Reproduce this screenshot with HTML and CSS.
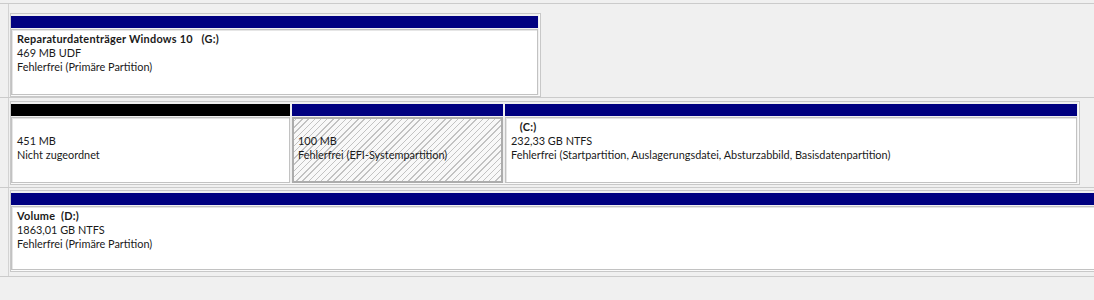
FILE: index.html
```html
<!DOCTYPE html>
<html lang="de">

<head>
    <meta charset="UTF-8">
    <meta name="viewport" content="width=device-width, initial-scale=1.0">
    <title>Datenträgerverwaltung</title>
    <link rel="stylesheet" href="styles.css">
</head>

<body>
    <div class="console">
        <div class="disk disk-g">
            <div class="gutter"></div>
            <div class="track">
                <div class="frame frame-g">
                    <div class="part part-g">
                        <div class="bar"></div>
                        <div class="box">
                            <div class="name">Reparaturdatenträger Windows 10   (G:)</div>
                            <div>469 MB UDF</div>
                            <div>Fehlerfrei (Primäre Partition)</div>
                        </div>
                    </div>
                </div>
            </div>
        </div>

        <div class="disk disk-0">
            <div class="gutter"></div>
            <div class="track">
                <div class="frame frame-0">
                    <div class="part part-free">
                        <div class="bar bar-free"></div>
                        <div class="box">
                            <div class="name"></div>
                            <div>451 MB</div>
                            <div>Nicht zugeordnet</div>
                        </div>
                    </div>
                    <div class="part part-efi">
                        <div class="bar"></div>
                        <div class="box box-selected">
                            <div class="name"></div>
                            <div>100 MB</div>
                            <div>Fehlerfrei (EFI-Systempartition)</div>
                        </div>
                    </div>
                    <div class="part part-c">
                        <div class="bar"></div>
                        <div class="box">
                            <div class="name">   (C:)</div>
                            <div>232,33 GB NTFS</div>
                            <div>Fehlerfrei (Startpartition, Auslagerungsdatei, Absturzabbild, Basisdatenpartition)</div>
                        </div>
                    </div>
                </div>
            </div>
        </div>

        <div class="disk disk-1">
            <div class="gutter"></div>
            <div class="track">
                <div class="frame frame-1">
                    <div class="part part-d">
                        <div class="bar"></div>
                        <div class="box">
                            <div class="name">Volume  (D:)</div>
                            <div>1863,01 GB NTFS</div>
                            <div>Fehlerfrei (Primäre Partition)</div>
                        </div>
                    </div>
                </div>
            </div>
        </div>
    </div>
</body>

</html>
```

FILE: styles.css
```css
body {
    margin: 0;
    background-color: #f0f0f0;
    font-family: Lato, "Liberation Sans", sans-serif;
    font-size: 10.9px;
    color: #1a1a1a;
    overflow: hidden;
}

.console {
    margin-top: 3px;
    border-top: 1px solid #cbcbcb;
}

.disk {
    display: flex;
    border-bottom: 1px solid #cbcbcb;
}

.gutter {
    width: 8px;
    flex-shrink: 0;
    border-right: 1px solid #d3d3d3;
}

.track {
    flex: 1;
    padding-left: 1px;
}

.disk-g .track {
    padding-top: 9px;
}

.disk-0 .track {
    padding-top: 3px;
    padding-bottom: 2px;
}

.disk-1 .track {
    padding-top: 2px;
    padding-bottom: 4px;
}

.frame {
    display: flex;
    gap: 2px;
    padding: 2px 2px 1px 0;
    border: 1px solid #c8c8c8;
    box-shadow: inset -1px -1px 0 #fafafa;
    box-sizing: border-box;
}

.frame-g {
    width: 531px;
}

.frame-0 {
    width: 1070px;
}

.frame-1 {
    width: 1110px;
}

.part {
    display: flex;
    flex-direction: column;
}

.part-g {
    width: 527px;
}

.part-free {
    width: 279px;
}

.part-efi {
    width: 211px;
}

.part-c {
    width: 572px;
}

.part-d {
    flex: 1;
}

.bar {
    height: 12px;
    background-color: #000080;
}

.bar-free {
    background-color: #000;
}

.box {
    height: 66px;
    margin-top: 1px;
    padding: 2px 5px;
    border: 1px solid #c2c2c2;
    box-shadow: inset 1px 1px 0 #e6e6e6;
    background-color: #fff;
    line-height: 14px;
    box-sizing: border-box;
}

.disk-1 .box {
    height: 64px;
}

.box-selected {
    padding: 1px 4px;
    border: 2px solid #acacac;
    box-shadow: none;
    background-color: #f8f8f8;
    background-image: repeating-linear-gradient(-45deg, #f8f8f8 0, #f8f8f8 3.4px, #c2c2c2 3.4px, #c2c2c2 4.4px);
}

.name {
    height: 14px;
    font-weight: bold;
    letter-spacing: 0.25px;
    white-space: pre;
}
```
